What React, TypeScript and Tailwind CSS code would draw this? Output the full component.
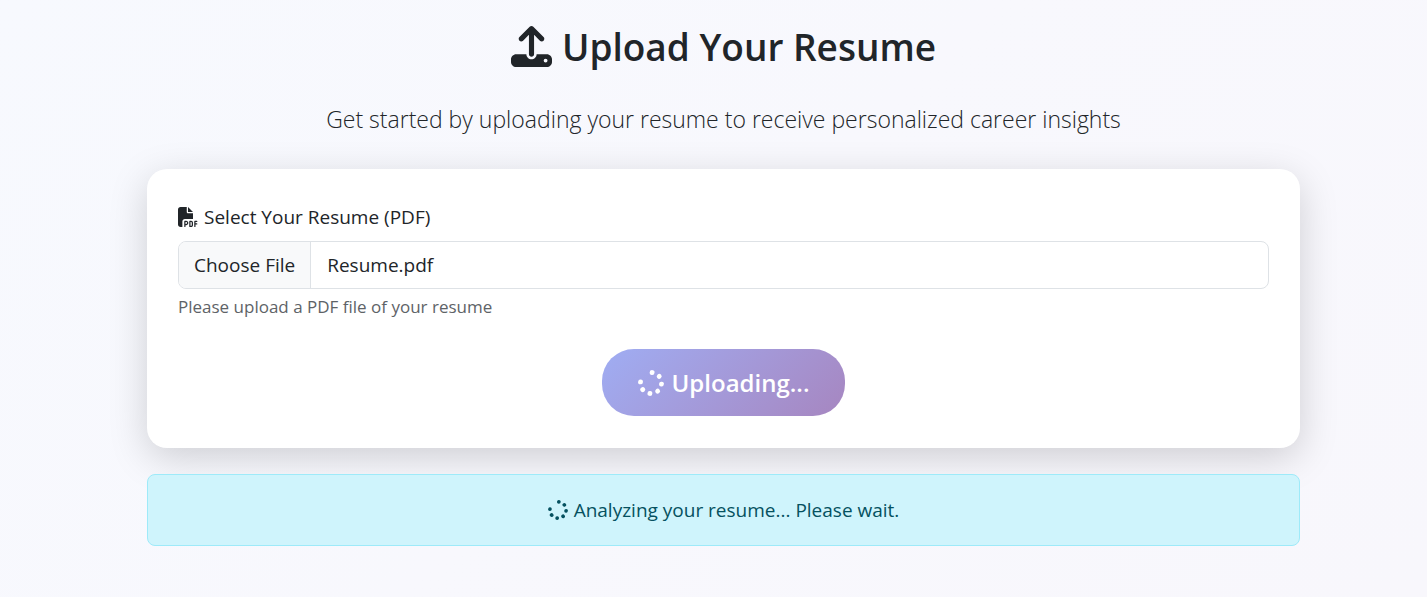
import { useEffect, useRef } from 'react';
import { FaFilePdf, FaSpinner, FaUpload } from 'react-icons/fa6';

export default function App() {
  const fileInput = useRef<HTMLInputElement>(null);

  useEffect(() => {
    if (!fileInput.current) return;
    const transfer = new DataTransfer();
    transfer.items.add(new File([''], 'Resume.pdf', { type: 'application/pdf' }));
    fileInput.current.files = transfer.files;
  }, []);

  return (
    <div className="min-h-screen bg-linear-135 from-[#f7f9fe] via-[#f8f8fd] to-[#f8f7fc] pt-5 pr-4 pb-12 pl-9 font-['Open_Sans','Noto_Sans',sans-serif] text-[#212529]">
      <main className="mx-auto w-full max-w-[1153px]">
        <header className="text-center">
          <h1 className="flex items-center justify-center gap-2.5 text-[37px] leading-[53px] font-semibold">
            <FaUpload className="size-[41px]" aria-hidden="true" />
            Upload Your Resume
          </h1>
          <p className="mt-7 text-[23px] leading-9 font-light">
            Get started by uploading your resume to receive personalized career insights
          </p>
        </header>

        <form className="mt-8 rounded-[20px] bg-white px-[31px] py-8 shadow-[0_10px_38px_rgba(0,0,0,0.17)]">
          <label htmlFor="resume" className="flex items-center gap-1.5 text-[19px] leading-8">
            <FaFilePdf className="size-5" aria-hidden="true" />
            Select Your Resume (PDF)
          </label>
          <input
            ref={fileInput}
            id="resume"
            type="file"
            accept=".pdf"
            className="mt-2 block h-12 w-full overflow-hidden rounded-lg border border-[#dee2e6] bg-white text-[19px] leading-[46px] file:mr-4 file:h-[46px] file:border-0 file:border-r file:border-solid file:border-[#dee2e6] file:bg-[#f8f9fa] file:px-[15px]"
          />
          <p className="mt-1.5 text-[17px] leading-6 text-[#5e6367]">Please upload a PDF file of your resume</p>
          <div className="mt-[30px] flex justify-center">
            <button
              type="submit"
              disabled
              className="flex h-[67px] items-center gap-2 rounded-[32px] bg-linear-135 from-[#9fadf3] to-[#a686c0] px-9 text-2xl font-semibold text-white"
            >
              <FaSpinner className="size-[26px] -rotate-84" aria-hidden="true" />
              Uploading...
            </button>
          </div>
        </form>

        <div
          role="status"
          className="mt-[26px] flex h-[72px] items-center justify-center gap-1.5 rounded-lg border border-[#9eeaf9] bg-[#cff4fc] text-[19px] text-[#055160]"
        >
          <FaSpinner className="size-5 -rotate-84" aria-hidden="true" />
          Analyzing your resume... Please wait.
        </div>
      </main>
    </div>
  );
}
